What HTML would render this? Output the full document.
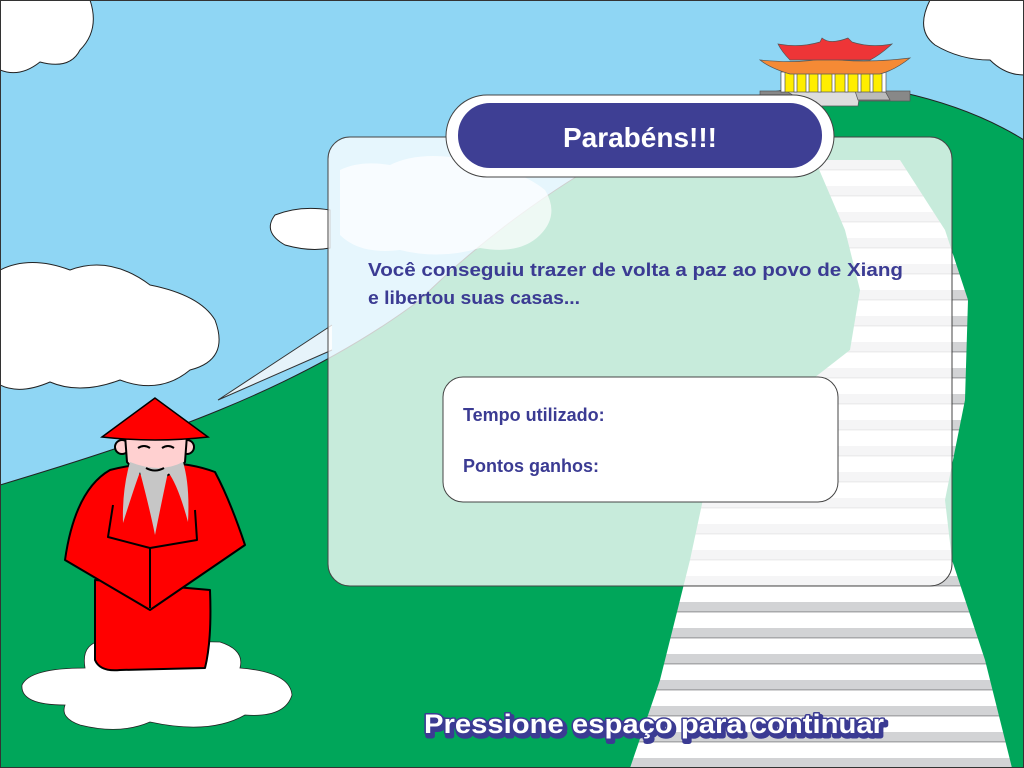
<!DOCTYPE html>
<html><head><meta charset="utf-8"><style>
html,body{margin:0;padding:0;width:1024px;height:768px;overflow:hidden;background:#8fd6f4}
svg{display:block}
text{font-family:"Liberation Sans",sans-serif;font-weight:bold}
</style></head><body>
<svg width="1024" height="768" viewBox="0 0 1024 768" xmlns="http://www.w3.org/2000/svg">
<defs>
<pattern id="st" patternUnits="userSpaceOnUse" width="1024" height="26" y="4">
<rect width="1024" height="26" fill="#fff"/>
<rect width="1024" height="9" fill="#d2d3d5"/>
<rect y="9" width="1024" height="1.5" fill="#a8a9ab"/>
</pattern>
</defs>
<rect width="1024" height="768" fill="#8fd6f4"/>
<g fill="#fff" stroke="#222" stroke-width="1">
<path d="M0,0 L90,0 Q100,30 80,50 Q70,70 40,62 Q20,78 0,70Z"/>
<path d="M1024,0 L930,0 Q915,30 935,45 Q960,60 990,60 Q1005,75 1024,75Z"/>
<path d="M0,270 Q30,255 70,270 Q110,255 150,285 Q200,295 215,320 Q230,360 190,370 Q160,395 120,380 Q80,395 50,382 Q20,395 0,385Z"/>
<path d="M330,210 Q300,205 275,215 Q262,232 285,245 Q310,252 330,248Z"/>
</g>
<path d="M0,485 C150,440 300,390 420,300 C520,200 680,100 800,88 L900,92 C960,105 1000,125 1024,140 L1024,768 L0,768Z" fill="#00a65a" stroke="#222" stroke-width="1"/>
<g stroke="#555" stroke-width="0.7">
<rect x="760" y="91" width="150" height="10" fill="#888"/>
<polygon points="786,91 860,91 858,106 812,106" fill="#ddd"/>
<polygon points="855,91 885,91 890,100 858,100" fill="#bbb"/>
<rect x="781" y="72" width="104" height="20" fill="#ffee00"/>
<g fill="#fff"><rect x="781" y="72" width="4" height="20"/><rect x="794" y="72" width="3" height="20"/><rect x="806" y="72" width="3" height="20"/><rect x="818" y="72" width="3" height="20"/><rect x="832" y="72" width="3" height="20"/><rect x="845" y="72" width="3" height="20"/><rect x="858" y="72" width="3" height="20"/><rect x="870" y="72" width="3" height="20"/><rect x="882" y="72" width="4" height="20"/></g>
<path d="M760,60 Q800,64 825,58 Q860,64 910,58 Q895,70 880,74 L790,74 Q770,68 760,60Z" fill="#f58a35"/>
<path d="M778,44 Q800,48 820,42 L822,38 Q830,45 848,38 L852,42 Q870,48 892,44 Q880,55 870,60 L790,60 Q782,52 778,44Z" fill="#ee3537"/>
</g>
<path d="M630,768 L660,680 L690,560 L705,490 L760,420 L850,350 L860,290 L845,230 L815,160 L900,160 L945,230 L968,300 L965,400 L945,500 L952,560 L985,660 L1012,768Z" fill="url(#st)"/>
<path d="M332,325 L218,400 L332,350" fill="#e6f3fa" stroke="#333" stroke-width="1"/>
<rect x="328" y="137" width="624" height="449" rx="22" fill="#fff" fill-opacity="0.78" stroke="#444" stroke-width="1"/>
<path d="M340,170 Q360,160 390,165 Q420,150 470,160 Q520,170 545,190 Q560,215 540,235 Q520,255 480,248 Q440,260 400,250 Q360,255 340,235Z" fill="#fff" fill-opacity="0.7"/>
<rect x="446" y="95" width="388" height="82" rx="41" fill="#fff" stroke="#444"/>
<rect x="458" y="103" width="364" height="65" rx="32" fill="#3e3f94"/>
<text x="640" y="147" fill="#fff" font-size="28" text-anchor="middle">Parabéns!!!</text>
<text x="368" y="276" fill="#3b3b93" font-size="18" textLength="535" lengthAdjust="spacingAndGlyphs">Você conseguiu trazer de volta a paz ao povo de Xiang</text>
<text x="368" y="304" fill="#3b3b93" font-size="18" textLength="212" lengthAdjust="spacingAndGlyphs">e libertou suas casas...</text>
<rect x="443" y="377" width="395" height="125" rx="20" fill="#fff" stroke="#444"/>
<text x="463" y="421" fill="#3b3b93" font-size="18">Tempo utilizado:</text>
<text x="463" y="472" fill="#3b3b93" font-size="18">Pontos ganhos:</text>
<path d="M85,668 Q80,640 110,640 L220,642 Q245,650 240,668 Q290,672 292,695 Q285,718 245,715 Q210,735 150,722 Q120,735 80,725 Q60,718 65,705 Q20,705 22,685 Q30,668 85,668Z" fill="#fff" stroke="#222" stroke-width="0.8"/>
<g stroke="#000" stroke-width="2" stroke-linejoin="round">
<path d="M95,580 L95,660 Q100,672 120,670 L205,668 Q212,640 210,590Z" fill="#f00"/>
<path d="M110,470 Q75,490 65,560 L150,610 L245,545 Q230,500 215,472 Q170,455 110,470Z" fill="#f00"/>
<path d="M113,505 L108,537 L150,548 L197,540 L195,510" fill="none"/>
<path d="M150,548 L150,608" fill="none"/>
<circle cx="122" cy="447" r="7" fill="#ffd0d0"/><circle cx="187" cy="447" r="7" fill="#ffd0d0"/>
<path d="M125,435 L187,435 L185,462 Q170,478 155,478 Q138,476 127,462Z" fill="#ffd0d0"/>
</g>
<path d="M130,462 Q122,490 123,523 Q135,485 140,472 Q150,510 155,535 Q162,500 168,472 Q178,485 188,522 Q190,485 183,462 Q160,474 130,462Z" fill="#c6c6c6"/>
<g stroke="#000" stroke-width="2" fill="none"><path d="M138,448 Q144,444 150,448"/><path d="M162,448 Q168,444 174,448"/><path d="M146,468 Q155,473 164,468"/></g>
<path d="M155,398 L102,437 Q155,443 208,437Z" fill="#f00" stroke="#000" stroke-width="1.5"/>
<text x="424" y="733" font-size="27" fill="#3b3b93" stroke="#3b3b93" stroke-width="5" stroke-linejoin="round" textLength="460" lengthAdjust="spacingAndGlyphs" transform="translate(2,3)">Pressione espaço para continuar</text>
<text x="424" y="733" font-size="27" fill="#fff" stroke="#3b3b93" stroke-width="3" stroke-linejoin="round" paint-order="stroke" textLength="460" lengthAdjust="spacingAndGlyphs">Pressione espaço para continuar</text>
<rect x="0.5" y="0.5" width="1023" height="767" fill="none" stroke="#333"/>
</svg>
</body></html>
